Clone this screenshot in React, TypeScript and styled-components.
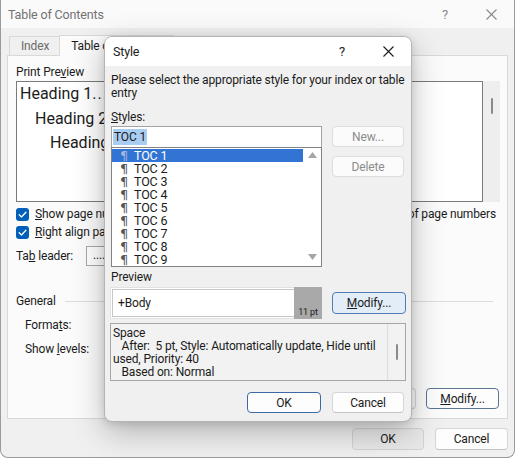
import React from 'react';
import styled, { createGlobalStyle, css } from 'styled-components';

const FONT = `Roboto, "Liberation Sans", sans-serif`;

const GlobalStyle = createGlobalStyle`
  html, body {
    margin: 0;
    padding: 0;
    background: #ffffff;
  }
  body {
    font-family: ${FONT};
    font-size: 12px;
    letter-spacing: -0.15px;
    color: #1b1b1b;
  }
`;

const STYLE_NAMES = ['TOC 1', 'TOC 2', 'TOC 3', 'TOC 4', 'TOC 5', 'TOC 6', 'TOC 7', 'TOC 8', 'TOC 9'];

const CloseIcon = () => (
  <svg width="11" height="11" viewBox="0 0 11 11" aria-hidden>
    <path d="M0.5 0.5 L10.5 10.5 M10.5 0.5 L0.5 10.5" stroke="currentColor" strokeWidth="1.1" fill="none" />
  </svg>
);

const CheckIcon = () => (
  <svg width="13" height="13" viewBox="0 0 13 13" aria-hidden>
    <rect x="0" y="0" width="13" height="13" rx="3" fill="#005fb8" />
    <path d="M3.2 6.8 L5.5 9 L9.9 4.3" stroke="#ffffff" strokeWidth="1.3" fill="none" strokeLinecap="round" strokeLinejoin="round" />
  </svg>
);

const Arrow = ({ up }: { up: boolean }) => (
  <svg width="9" height="6" viewBox="0 0 9 6" aria-hidden>
    <path d={up ? 'M0 6 L4.5 0 L9 6 Z' : 'M0 0 L4.5 6 L9 0 Z'} fill="#a6a6a6" />
  </svg>
);

const Key = ({ children }: { children: React.ReactNode }) => <u>{children}</u>;

export default function App() {
  return (
    <Page>
      <GlobalStyle />
      <TocWindow>
        <TitleBar>
          <WindowTitle>Table of Contents</WindowTitle>
          <CaptionButton $muted>?</CaptionButton>
          <CaptionButton $muted>
            <CloseIcon />
          </CaptionButton>
        </TitleBar>

        <WindowBody>
          <TabRow>
            <Tab>Index</Tab>
            <Tab $active>Table of Contents</Tab>
            <Tab>Table of Figures</Tab>
          </TabRow>

          <TabPanel>
            <PreviewColumns>
              <Column>
                <Label>
                  Print Pre<Key>v</Key>iew
                </Label>
                <PreviewBox>
                  <PrintPane>
                    <HeadingLine $indent={3}>
                      Heading 1<Leader>........................................</Leader>1
                    </HeadingLine>
                    <HeadingLine $indent={18}>
                      Heading 2<Leader>........................................</Leader>3
                    </HeadingLine>
                    <HeadingLine $indent={33}>
                      Heading 3<Leader>........................................</Leader>5
                    </HeadingLine>
                  </PrintPane>
                  <PaneScroll />
                </PreviewBox>
                <CheckRow>
                  <CheckIcon />
                  <span>
                    <Key>S</Key>how page numbers
                  </span>
                </CheckRow>
                <CheckRow>
                  <CheckIcon />
                  <span>
                    <Key>R</Key>ight align page numbers
                  </span>
                </CheckRow>
                <FieldRow>
                  <span>
                    Ta<Key>b</Key> leader:
                  </span>
                  <LeaderSelect>.......</LeaderSelect>
                </FieldRow>
              </Column>

              <Column>
                <Label>
                  We<Key>b</Key> Preview
                </Label>
                <PreviewBox>
                  <PrintPane>
                    <WebLink $indent={3}>Heading 1</WebLink>
                    <WebLink $indent={18}>Heading 2</WebLink>
                    <WebLink $indent={33}>Heading 3</WebLink>
                  </PrintPane>
                  <PaneScroll>
                    <Thumb />
                  </PaneScroll>
                </PreviewBox>
                <CheckRow $end>
                  <CheckIcon />
                  <span>
                    Use <Key>h</Key>yperlinks instead of page numbers
                  </span>
                </CheckRow>
              </Column>
            </PreviewColumns>

            <GroupHeader>
              <span>General</span>
              <GroupRule />
            </GroupHeader>
            <IndentRow>
              <span>
                Forma<Key>t</Key>s:
              </span>
            </IndentRow>
            <IndentRow>
              <span>
                Show <Key>l</Key>evels:
              </span>
            </IndentRow>

            <PanelButtons>
              <Button $width={73}>
                <Key>O</Key>ptions...
              </Button>
              <Button $width={73} $variant="focus">
                <Key>M</Key>odify...
              </Button>
            </PanelButtons>
          </TabPanel>

          <FooterButtons>
            <Button $width={72} $height={22} $variant="gray">
              OK
            </Button>
            <Button $width={73} $height={22}>
              Cancel
            </Button>
          </FooterButtons>
        </WindowBody>
      </TocWindow>

      <StyleDialog>
        <DialogTitleBar>
          <DialogTitle>Style</DialogTitle>
          <CaptionButton $height={30}>?</CaptionButton>
          <CaptionButton $height={30}>
            <CloseIcon />
          </CaptionButton>
        </DialogTitleBar>

        <DialogBody>
          <Intro>
            Please select the appropriate style for your index or table
            <br />
            entry
          </Intro>

          <DialogGrid>
            <StylesBlock>
              <Label>
                <Key>S</Key>tyles:
              </Label>
              <NameInput>
                <Selected>TOC 1</Selected>
              </NameInput>
              <StyleList>
                <ListItems>
                  {STYLE_NAMES.map((name, i) => (
                    <ListRow key={name} $selected={i === 0}>
                      <Pilcrow $selected={i === 0}>¶</Pilcrow>
                      {name}
                    </ListRow>
                  ))}
                </ListItems>
                <ListScroll>
                  <Arrow up />
                  <Arrow up={false} />
                </ListScroll>
              </StyleList>
            </StylesBlock>

            <SideButtons>
              <Button $width={72} $variant="disabled">
                New...
              </Button>
              <Button $width={72} $variant="disabled">
                Delete
              </Button>
            </SideButtons>

            <PreviewLabel>Preview</PreviewLabel>

            <PreviewFrame>
              <PreviewText>+Body</PreviewText>
              <SizeTag>11 pt</SizeTag>
            </PreviewFrame>

            <ModifyCell>
              <Button $width={74} $height={22} $variant="accent">
                <Key>M</Key>odify...
              </Button>
            </ModifyCell>

            <Description>
              <DescText>
                <div>Space</div>
                <div>{'   After:  5 pt, Style: Automatically update, Hide until'}</div>
                <div>used, Priority: 40</div>
                <div>{'   Based on: Normal'}</div>
              </DescText>
              <DescScroll>
                <Thumb />
              </DescScroll>
            </Description>
          </DialogGrid>

          <DialogFooter>
            <Button $width={74} $height={21} $variant="primary">
              OK
            </Button>
            <Button $width={72} $height={21}>
              Cancel
            </Button>
          </DialogFooter>
        </DialogBody>
      </StyleDialog>
    </Page>
  );
}

const Page = styled.div`
  position: relative;
  width: 516px;
  height: 460px;
  overflow: hidden;
  background: #ffffff;
`;

/* ---------- background window ---------- */

const TocWindow = styled.div`
  box-sizing: border-box;
  width: 515px;
  height: 458px;
  display: flex;
  flex-direction: column;
  background: #f0f0f0;
  border: 1px solid #9b9b9b;
  border-top: none;
  border-radius: 0 0 8px 8px;
  overflow: hidden;
`;

const TitleBar = styled.div`
  height: 28px;
  flex: none;
  display: flex;
  align-items: center;
  background: #fafafa;
`;

const WindowTitle = styled.div`
  flex: 1;
  padding-left: 7px;
  color: #727272;
  font-size: 12.5px;
`;

const CaptionButton = styled.div<{ $muted?: boolean; $height?: number }>`
  width: 46px;
  height: ${({ $height }) => $height ?? 28}px;
  display: flex;
  align-items: center;
  justify-content: center;
  font-size: 13px;
  color: ${({ $muted }) => ($muted ? '#8a8a8a' : '#1b1b1b')};
`;

const WindowBody = styled.div`
  flex: 1;
  display: flex;
  flex-direction: column;
  padding: 7px 6px 6px 6px;
`;

const TabRow = styled.div`
  display: flex;
  align-items: flex-end;
  height: 21px;
  padding-left: 2px;
  margin-bottom: -1px;
  position: relative;
  z-index: 1;
`;

const Tab = styled.div<{ $active?: boolean }>`
  box-sizing: border-box;
  display: flex;
  align-items: center;
  padding: 0 10px 0 11px;
  border: 1px solid #d9d9d9;
  border-bottom: none;
  margin-right: -1px;
  ${({ $active }) =>
    $active
      ? css`
          height: 21px;
          background: #fbfbfb;
          color: #1b1b1b;
        `
      : css`
          height: 20px;
          background: #f0f0f0;
          color: #6b6b6b;
          border-bottom: 1px solid #d9d9d9;
        `}
`;

const TabPanel = styled.div`
  box-sizing: border-box;
  height: 364px;
  flex: none;
  display: flex;
  flex-direction: column;
  padding: 8px 7px 9px 8px;
  background: #fbfbfb;
  border: 1px solid #d9d9d9;
`;

const PreviewColumns = styled.div`
  display: grid;
  grid-template-columns: 235px 235px;
  column-gap: 14px;
`;

const Column = styled.div`
  display: flex;
  flex-direction: column;
`;

const Label = styled.div`
  line-height: 16px;
  margin-bottom: 1px;
`;

const PreviewBox = styled.div`
  height: 121px;
  display: flex;
  margin-bottom: 3px;
`;

const PrintPane = styled.div`
  flex: 1;
  min-width: 0;
  box-sizing: border-box;
  background: #ffffff;
  border: 1px solid #7a7a7a;
  overflow: hidden;
`;

const PaneScroll = styled.div`
  width: 17px;
  flex: none;
  background: #eeeeee;
  display: flex;
  justify-content: center;
  padding-top: 17px;
  box-sizing: border-box;
`;

const Thumb = styled.div`
  width: 2px;
  height: 16px;
  border-radius: 1px;
  background: #8a8a8a;
`;

const HeadingLine = styled.div<{ $indent: number }>`
  display: flex;
  font-size: 16px;
  letter-spacing: 0;
  line-height: 24.5px;
  white-space: nowrap;
  padding-left: ${({ $indent }) => $indent}px;
  padding-right: 4px;
  color: #1b1b1b;
`;

const Leader = styled.span`
  flex: 1;
  overflow: hidden;
  letter-spacing: 1px;
`;

const WebLink = styled.div<{ $indent: number }>`
  font-size: 16px;
  line-height: 24.5px;
  padding-left: ${({ $indent }) => $indent}px;
  color: #0563c1;
  text-decoration: underline;
`;

const CheckRow = styled.div<{ $end?: boolean }>`
  height: 18px;
  display: flex;
  align-items: center;
  gap: 6px;
  white-space: nowrap;
  justify-content: ${({ $end }) => ($end ? 'flex-end' : 'flex-start')};
  padding-right: ${({ $end }) => ($end ? '4px' : '0')};
`;

const FieldRow = styled.div`
  margin-top: 5px;
  height: 20px;
  display: flex;
  align-items: center;
  gap: 13px;
`;

const LeaderSelect = styled.div`
  box-sizing: border-box;
  width: 120px;
  height: 20px;
  padding-left: 6px;
  border: 1px solid #a8a8a8;
  background: #ffffff;
  line-height: 16px;
`;

const GroupHeader = styled.div`
  margin-top: 27px;
  height: 16px;
  display: flex;
  align-items: center;
  gap: 9px;
`;

const GroupRule = styled.div`
  flex: 1;
  height: 1px;
  margin-right: 7px;
  background: #dcdcdc;
`;

const IndentRow = styled.div`
  padding-left: 9px;
  margin-top: 8px;
  height: 16px;
  display: flex;
  align-items: center;
`;

const PanelButtons = styled.div`
  margin-top: auto;
  display: flex;
  justify-content: flex-end;
  gap: 10px;
  padding-right: 1px;
`;

const FooterButtons = styled.div`
  margin-top: 9px;
  display: flex;
  justify-content: flex-end;
  gap: 11px;
`;

type ButtonVariant = 'normal' | 'gray' | 'focus' | 'accent' | 'primary' | 'disabled';

const buttonVariants: Record<ButtonVariant, ReturnType<typeof css>> = {
  normal: css`
    background: #fdfdfd;
    border-color: #d6d6d6;
    border-bottom-color: #c4c4c4;
  `,
  gray: css`
    background: #e9e9e9;
    border-color: #d3d3d3;
  `,
  focus: css`
    background: #fdfdfd;
    border-color: #5b7593;
  `,
  accent: css`
    background: #e2edf8;
    border-color: #4f7cb3;
  `,
  primary: css`
    background: #fdfdfd;
    border-color: #3d6aa3;
  `,
  disabled: css`
    background: #fbfbfb;
    border-color: #dcdcdc;
    color: #8c8c8c;
  `,
};

const Button = styled.div<{ $width: number; $height?: number; $variant?: ButtonVariant }>`
  box-sizing: border-box;
  width: ${({ $width }) => $width}px;
  height: ${({ $height }) => $height ?? 21}px;
  display: flex;
  align-items: center;
  justify-content: center;
  border: 1px solid;
  border-radius: 4px;
  color: #1b1b1b;
  ${({ $variant }) => buttonVariants[$variant ?? 'normal']}
`;

/* ---------- Style dialog ---------- */

const StyleDialog = styled.div`
  position: absolute;
  z-index: 10;
  left: 104px;
  top: 36px;
  box-sizing: border-box;
  width: 308px;
  height: 386px;
  display: flex;
  flex-direction: column;
  background: #f0f0f0;
  border: 1px solid #b4b4b4;
  border-radius: 8px;
  overflow: hidden;
  box-shadow: 0 10px 32px rgba(0, 0, 0, 0.26), 0 2px 8px rgba(0, 0, 0, 0.12);
`;

const DialogTitleBar = styled.div`
  height: 29px;
  flex: none;
  display: flex;
  align-items: center;
  background: #ffffff;
`;

const DialogTitle = styled.div`
  flex: 1;
  padding-left: 8px;
  font-size: 12.5px;
`;

const DialogBody = styled.div`
  flex: 1;
  display: flex;
  flex-direction: column;
  padding: 8px 6px 8px 6px;
`;

const Intro = styled.div`
  line-height: 13px;
  margin-bottom: 9px;
  white-space: nowrap;
`;

const DialogGrid = styled.div`
  display: grid;
  grid-template-columns: 211px 74px;
  column-gap: 10px;
`;

const StylesBlock = styled.div`
  display: flex;
  flex-direction: column;
`;

const NameInput = styled.div`
  box-sizing: border-box;
  height: 21px;
  padding: 2px 1px;
  background: #ffffff;
  border: 1px solid #a3a3a3;
  border-bottom: none;
  display: flex;
  align-items: center;
`;

const Selected = styled.span`
  background: #a9cdf1;
  line-height: 16px;
  padding: 0 1px;
`;

const StyleList = styled.div`
  box-sizing: border-box;
  height: 120px;
  display: flex;
  background: #ffffff;
  border: 1px solid #828282;
`;

const ListItems = styled.div`
  flex: 1;
  padding-top: 1px;
`;

const ListRow = styled.div<{ $selected: boolean }>`
  height: 13px;
  display: flex;
  align-items: center;
  padding-left: 8px;
  line-height: 13px;
  font-size: 12.5px;
  color: ${({ $selected }) => ($selected ? '#ffffff' : '#1b1b1b')};
  background: ${({ $selected }) => ($selected ? '#3174d3' : 'transparent')};
`;

const Pilcrow = styled.span<{ $selected: boolean }>`
  width: 14px;
  font-family: "DejaVu Sans", sans-serif;
  font-size: 13px;
  line-height: 13px;
  letter-spacing: 0;
  color: ${({ $selected }) => ($selected ? '#a4b9da' : '#555555')};
`;

const ListScroll = styled.div`
  width: 18px;
  flex: none;
  display: flex;
  flex-direction: column;
  align-items: center;
  justify-content: space-between;
  padding: 4px 0 6px;
`;

const SideButtons = styled.div`
  padding-top: 17px;
  display: flex;
  flex-direction: column;
  gap: 9px;
`;

const PreviewLabel = styled.div`
  grid-column: 1 / -1;
  margin-top: 2px;
  line-height: 16px;
  margin-bottom: 2px;
`;

const PreviewFrame = styled.div`
  box-sizing: border-box;
  height: 32px;
  margin-left: -1px;
  display: flex;
  background: #ffffff;
  border: 1px solid #e2e2e2;
  padding: 1px 0 1px 1px;
`;

const PreviewText = styled.div`
  flex: 1;
  border: 1px solid #c6c6c6;
  border-right: none;
  padding-left: 5px;
  display: flex;
  align-items: center;
`;

const SizeTag = styled.div`
  width: 28px;
  margin: -2px -1px -2px 0;
  background: #a9a9a9;
  font-size: 9px;
  display: flex;
  align-items: flex-end;
  justify-content: center;
  padding-bottom: 2px;
  box-sizing: border-box;
`;

const ModifyCell = styled.div`
  align-self: center;
`;

const Description = styled.div`
  grid-column: 1 / -1;
  margin: 4px 0 0 -1px;
  box-sizing: border-box;
  height: 58px;
  display: flex;
  border: 1px solid #a6a6a6;
  background: #f2f2f2;
  overflow: hidden;
`;

const DescText = styled.div`
  flex: 1;
  padding: 3px 0 0 2px;
  line-height: 13px;
  white-space: pre;
  overflow: hidden;
`;

const DescScroll = styled.div`
  width: 18px;
  flex: none;
  border-left: 1px solid #dddddd;
  display: flex;
  justify-content: center;
  padding-top: 20px;
  box-sizing: border-box;
`;

const DialogFooter = styled.div`
  margin-top: auto;
  display: flex;
  justify-content: flex-end;
  gap: 11px;
  padding-right: 1px;
`;
